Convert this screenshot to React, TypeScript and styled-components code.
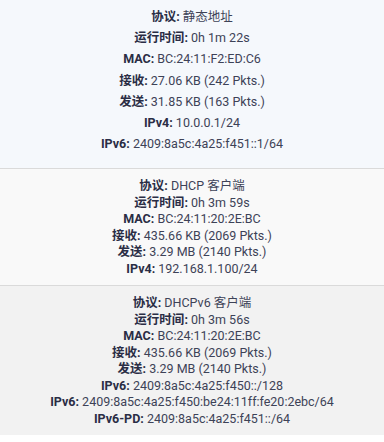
import styled, { createGlobalStyle } from "styled-components";

const GlobalStyle = createGlobalStyle`
  html, body {
    margin: 0;
    padding: 0;
    background: #ffffff;
  }
  body {
    font-family: Roboto, "Noto Sans CJK SC", sans-serif;
  }
`;

type Row = { label: string; value: string };

type Section = { rows: Row[]; tone: "blue" | "light" | "gray"; spacious?: boolean };

const sections: Section[] = [
  {
    tone: "blue",
    spacious: true,
    rows: [
      { label: "协议", value: "静态地址" },
      { label: "运行时间", value: "0h 1m 22s" },
      { label: "MAC", value: "BC:24:11:F2:ED:C6" },
      { label: "接收", value: "27.06 KB (242 Pkts.)" },
      { label: "发送", value: "31.85 KB (163 Pkts.)" },
      { label: "IPv4", value: "10.0.0.1/24" },
      { label: "IPv6", value: "2409:8a5c:4a25:f451::1/64" },
    ],
  },
  {
    tone: "light",
    rows: [
      { label: "协议", value: "DHCP 客户端" },
      { label: "运行时间", value: "0h 3m 59s" },
      { label: "MAC", value: "BC:24:11:20:2E:BC" },
      { label: "接收", value: "435.66 KB (2069 Pkts.)" },
      { label: "发送", value: "3.29 MB (2140 Pkts.)" },
      { label: "IPv4", value: "192.168.1.100/24" },
    ],
  },
  {
    tone: "gray",
    rows: [
      { label: "协议", value: "DHCPv6 客户端" },
      { label: "运行时间", value: "0h 3m 56s" },
      { label: "MAC", value: "BC:24:11:20:2E:BC" },
      { label: "接收", value: "435.66 KB (2069 Pkts.)" },
      { label: "发送", value: "3.29 MB (2140 Pkts.)" },
      { label: "IPv6", value: "2409:8a5c:4a25:f450::/128" },
      { label: "IPv6", value: "2409:8a5c:4a25:f450:be24:11ff:fe20:2ebc/64" },
      { label: "IPv6-PD", value: "2409:8a5c:4a25:f451::/64" },
    ],
  },
];

const tones = {
  blue: "#f5f8fc",
  light: "#f9f9f9",
  gray: "#f2f2f2",
};

const Page = styled.div`
  display: flex;
  flex-direction: column;
  width: 384px;
`;

const Block = styled.div<{ $tone: Section["tone"]; $spacious?: boolean }>`
  background: ${(p) => tones[p.$tone]};
  border-top: ${(p) => (p.$tone === "blue" ? "none" : "1.5px solid #dadada")};
  padding: ${(p) => (p.$spacious ? "6px 0 14px" : "9px 0 8px")};
  display: flex;
  flex-direction: column;
  align-items: center;
`;

const Line = styled.div<{ $spacious?: boolean }>`
  font-size: 12.5px;
  line-height: ${(p) => (p.$spacious ? "21.2px" : "16.5px")};
  color: #3d4257;
  white-space: nowrap;
  text-align: center;
`;

const Label = styled.strong`
  font-weight: 700;
  color: #2a2d45;
`;

const App = () => (
  <>
    <GlobalStyle />
    <Page>
      {sections.map((s, i) => (
        <Block key={i} $tone={s.tone} $spacious={s.spacious}>
          {s.rows.map((r, j) => (
            <Line key={j} $spacious={s.spacious}>
              <Label>{r.label}:</Label> {r.value}
            </Line>
          ))}
        </Block>
      ))}
    </Page>
  </>
);

export default App;
